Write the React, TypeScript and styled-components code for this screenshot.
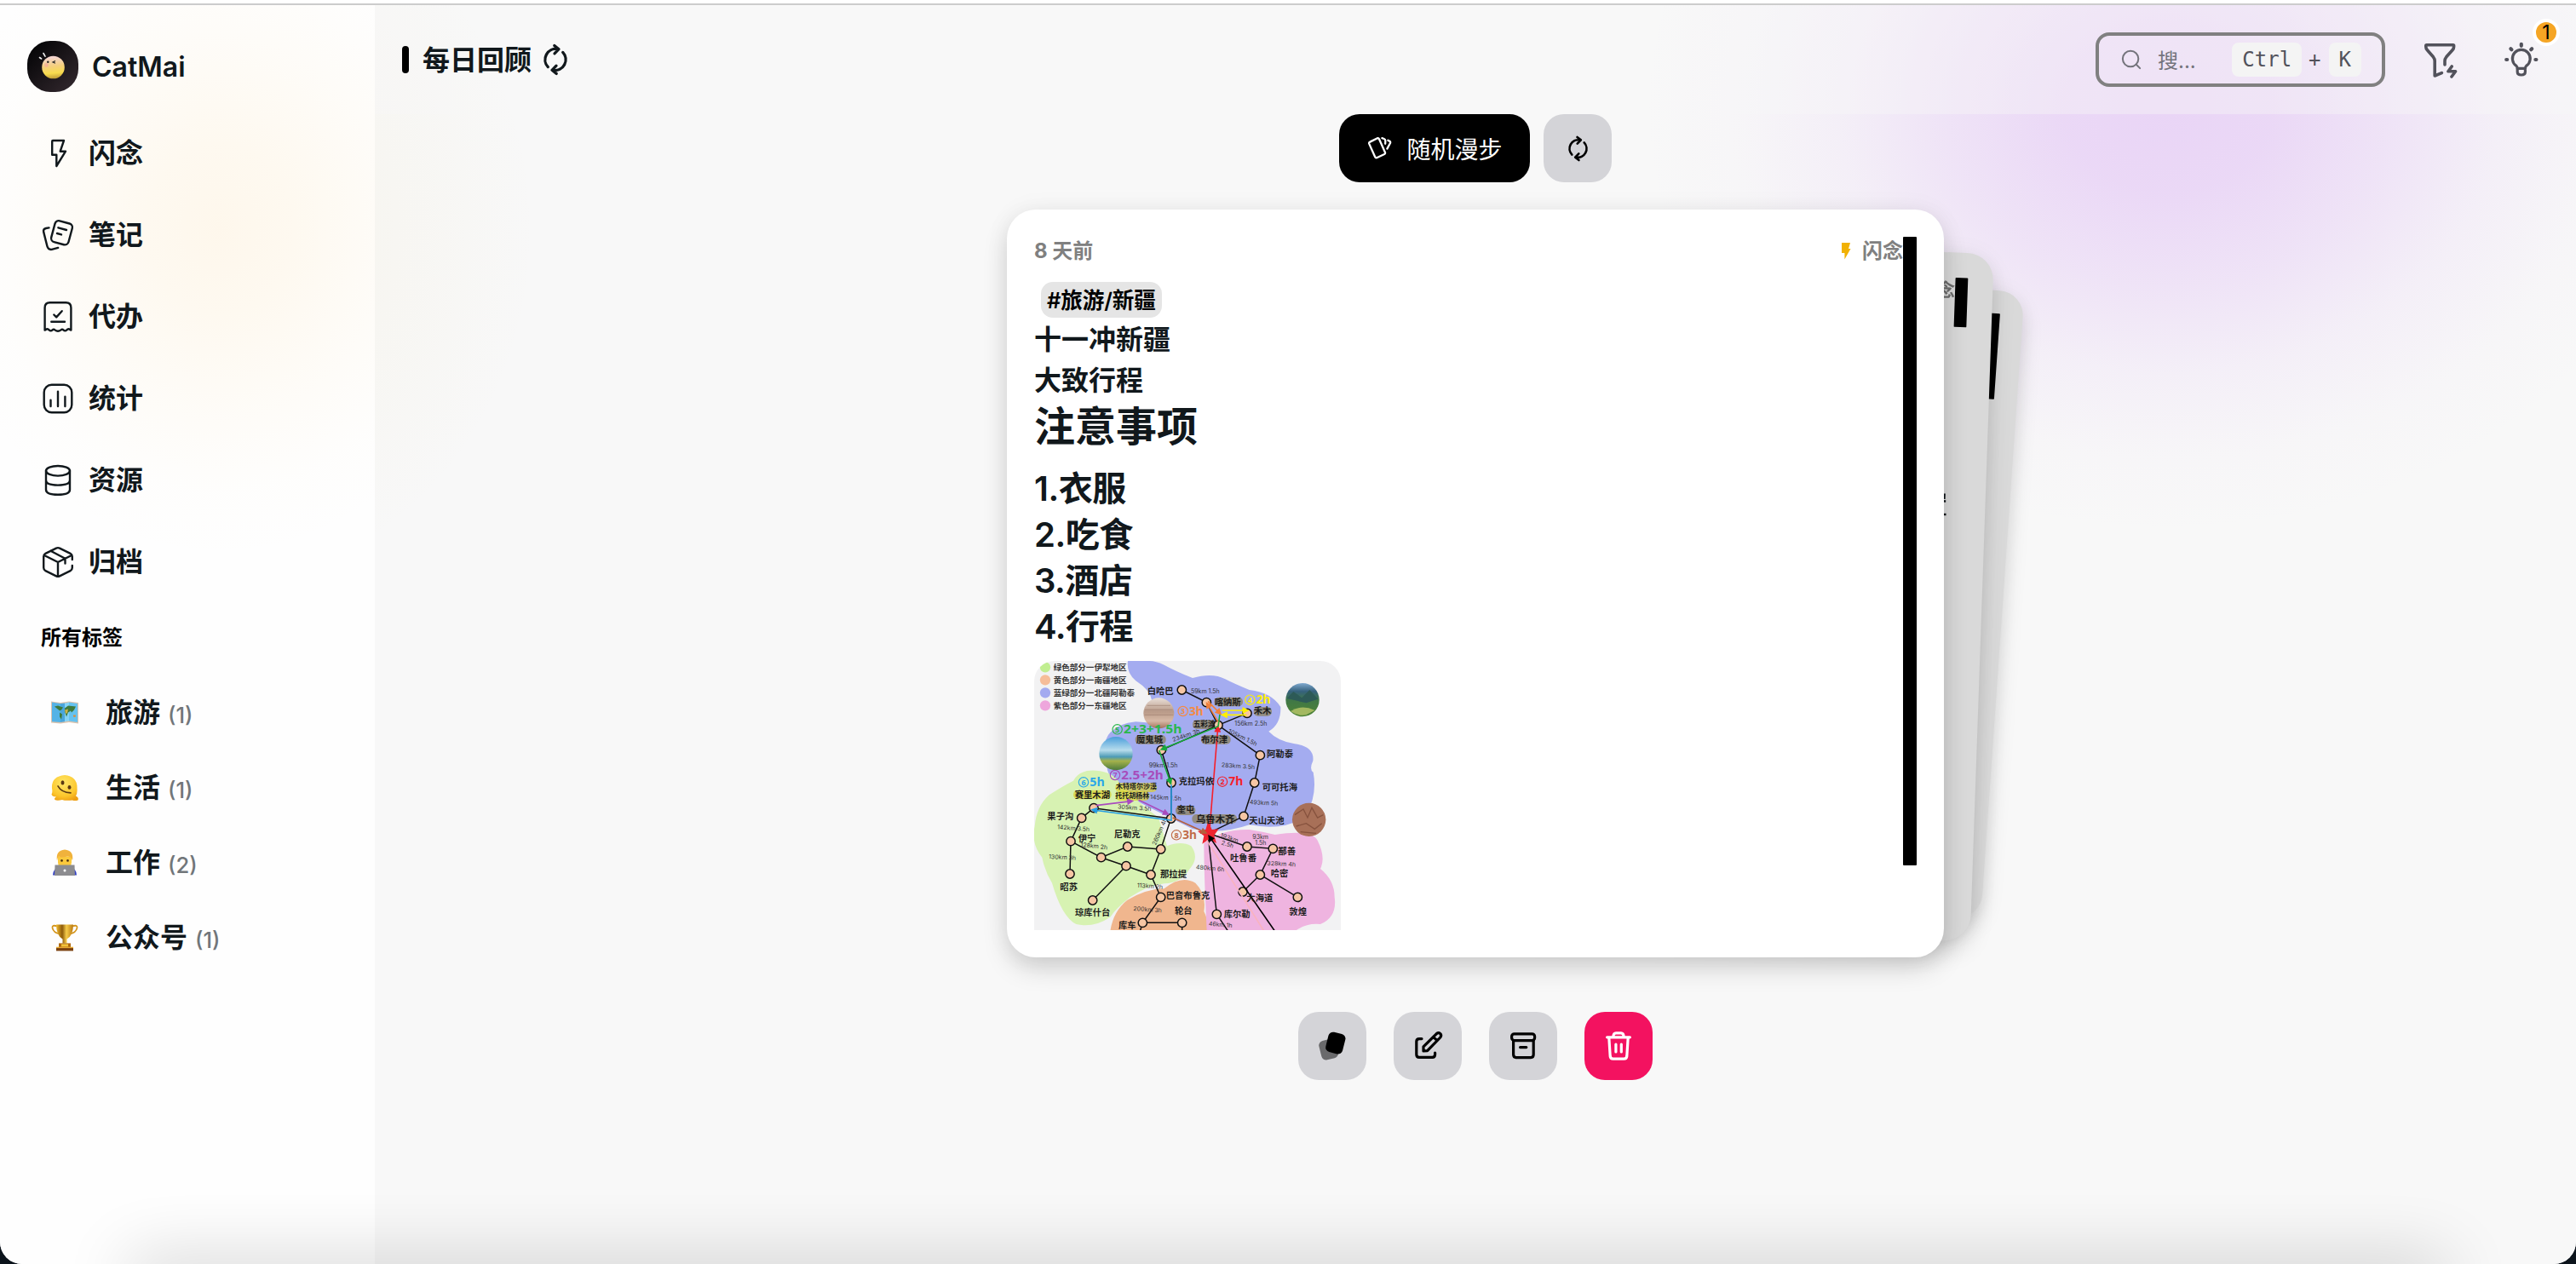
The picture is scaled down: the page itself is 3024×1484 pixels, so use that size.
import React from "react";
import styled, { createGlobalStyle, css } from "styled-components";

const sans = `Inter, "Noto Sans CJK SC", sans-serif`;
const mono = `"DejaVu Sans Mono", "Liberation Mono", monospace`;

const GlobalStyle = createGlobalStyle`
  *, *::before, *::after { box-sizing: border-box; }
  html, body { margin: 0; padding: 0; background: #0c141c; }
  body { font-family: ${sans}; color: #11181c; overflow: hidden; }
  svg { display: block; flex: none; }
  p, h1, h2, h3 { margin: 0; }
`;

/* ---------- shell ---------- */

const Shell = styled.div`
  position: relative;
  display: flex;
  flex-direction: column;
  width: 3024px;
  height: 1484px;
  overflow: hidden;
  border-radius: 0 0 26px 26px;
  background: #f8f8f8;
`;

const TopEdge = styled.div`
  flex: none;
  height: 6px;
  background: #fff;
  border-bottom: 2px solid #ccc;
`;

const Body = styled.div`
  flex: 1;
  display: flex;
  min-height: 0;
`;

const BottomShade = styled.div`
  position: absolute;
  left: 160px;
  right: 160px;
  bottom: -34px;
  height: 30px;
  box-shadow: 0 0 80px 8px rgba(0, 0, 0, 0.2);
  pointer-events: none;
`;

/* ---------- sidebar ---------- */

const Sidebar = styled.aside`
  flex: none;
  width: 440px;
  padding-top: 42px;
  background:
    radial-gradient(
      ellipse 340px 390px at 258px 262px,
      rgba(255, 190, 85, 0.105) 0%,
      rgba(255, 195, 90, 0.085) 25%,
      rgba(255, 200, 100, 0.042) 55%,
      rgba(255, 205, 120, 0.012) 80%,
      rgba(255, 205, 120, 0) 100%
    ),
    #fefefe;
`;

const Brand = styled.div`
  display: flex;
  align-items: center;
  gap: 16px;
  height: 60px;
  padding-left: 32px;
  font-size: 32px;
  font-weight: 600;
  line-height: 60px;
`;

const BrandName = styled.span`
  padding-top: 2px;
`;

const Nav = styled.nav`
  display: flex;
  flex-direction: column;
  margin-top: 24px;
`;

const NavItem = styled.a`
  display: flex;
  align-items: center;
  gap: 16px;
  height: 96px;
  padding-left: 48px;
  font-size: 32px;
  font-weight: 600;
`;

const NavLabel = styled.span`
  line-height: 48px;
`;

const SectionTitle = styled.h3`
  height: 40px;
  margin: 21px 0 24px;
  padding-left: 48px;
  color: #000;
  font-size: 24px;
  font-weight: 700;
  line-height: 40px;
`;

const TagItem = styled.a`
  display: flex;
  align-items: center;
  height: 88px;
  padding-left: 60px;
`;

const TagName = styled.span`
  margin-left: 32px;
  font-size: 32px;
  font-weight: 600;
  line-height: 48px;
`;

const TagCount = styled.small`
  margin: 6px 0 0 9px;
  color: #71767a;
  font-size: 25.6px;
  font-weight: 500;
  line-height: 40px;
`;

/* ---------- header ---------- */

const Main = styled.main`
  flex: 1;
  display: flex;
  flex-direction: column;
  align-items: center;
  background:
    radial-gradient(
      ellipse 620px 500px at 2105px 120px,
      rgba(190, 110, 240, 0.255) 0%,
      rgba(190, 110, 240, 0.23) 20%,
      rgba(190, 115, 240, 0.155) 42%,
      rgba(192, 125, 240, 0.075) 62%,
      rgba(195, 135, 240, 0.02) 82%,
      rgba(200, 140, 240, 0) 100%
    ),
    radial-gradient(
      ellipse 370px 420px at -180px 264px,
      rgba(225, 190, 70, 0.12) 0%,
      rgba(225, 195, 90, 0.045) 50%,
      rgba(225, 200, 100, 0) 100%
    ),
    #f8f8f8;
`;

const Header = styled.header`
  display: flex;
  align-items: center;
  width: 100%;
  height: 128px;
  padding: 0 42px 0 32px;
  background: rgba(248, 248, 248, 0.4);
`;

const TitleMark = styled.span`
  width: 8px;
  height: 32px;
  border-radius: 4px;
  background: #000;
`;

const Title = styled.h1`
  margin: 0 8px 0 16px;
  padding-top: 1px;
  font-size: 32px;
  font-weight: 600;
  line-height: 48px;
`;

const Spacer = styled.div`
  flex: 1;
`;

const SearchBox = styled.div`
  display: flex;
  align-items: center;
  width: 340px;
  height: 64px;
  padding: 0 24px 0 26px;
  border: 4px solid #808080;
  border-radius: 16px;
  color: #52525b;
  font-family: ${mono};
  font-size: 24px;
`;

const Placeholder = styled.span`
  flex: 1;
  margin-left: 19px;
  padding-bottom: 2px;
  color: #74747c;
  font-family: ${sans};
`;

const Key = styled.kbd`
  padding: 0 12px;
  border-radius: 8px;
  background: #f4f4f4;
  font-family: ${mono};
  font-size: 24px;
  line-height: 40px;
`;

const Plus = styled.span`
  margin: 0 9px 0 8px;
`;

const HeaderIcon = styled.span<{ $gap: number }>`
  position: relative;
  margin-left: ${(p) => p.$gap}px;
  color: #52525b;
`;

const Badge = styled.span`
  position: absolute;
  left: 35px;
  top: -26px;
  width: 32px;
  height: 32px;
  border: 4px solid #fff;
  border-radius: 50%;
  background: #f5a524;
  color: #000;
  font-size: 23px;
  line-height: 24px;
  text-align: center;
`;

/* ---------- actions ---------- */

const ActionRow = styled.div<{ $gap: number; $top?: number }>`
  display: flex;
  gap: ${(p) => p.$gap}px;
  margin-top: ${(p) => p.$top ?? 0}px;
`;

const tones = {
  dark: css`background: #000; color: #fff;`,
  gray: css`background: #d4d4d8; color: #000;`,
  danger: css`background: #f31260; color: #fff;`,
};

const Button = styled.button<{ $tone: keyof typeof tones; $wide?: boolean }>`
  display: flex;
  align-items: center;
  justify-content: center;
  gap: 17px;
  width: ${(p) => (p.$wide ? 224 : 80)}px;
  height: 80px;
  padding: 0;
  border: 0;
  border-radius: 24px;
  font-family: ${sans};
  font-size: 28px;
  ${(p) => tones[p.$tone]}
`;

/* ---------- card deck ---------- */

const Deck = styled.section`
  position: relative;
  width: 1100px;
  height: 878px;
  margin-top: 32px;
`;

const Card = styled.article<{ $back?: boolean }>`
  position: absolute;
  inset: 0;
  display: flex;
  padding: 32px;
  border-radius: 34px;
  background: #fff;
  box-shadow:
    0 14px 30px -2px rgba(0, 0, 0, 0.17),
    0 0 30px rgba(0, 0, 0, 0.05);
  ${(p) => p.$back && css`filter: brightness(0.85);`}
`;

const CardContent = styled.div`
  flex: 1;
  height: 814px;
  overflow: hidden;
`;

const Thumb = styled.div<{ $length: number }>`
  flex: none;
  width: 16px;
  height: ${(p) => p.$length}px;
  border-radius: 1px;
  background: #000;
`;

const CardMeta = styled.div`
  display: flex;
  align-items: center;
  justify-content: space-between;
  height: 32px;
  margin-bottom: 16px;
  padding-top: 2px;
  color: #808080;
  font-size: 24px;
  font-weight: 700;
  line-height: 32px;
`;

const Kind = styled.span`
  display: flex;
  align-items: center;
  gap: 8px;
`;

const Line = styled.p<{ $right?: boolean; $top?: number }>`
  margin-top: ${(p) => p.$top ?? 0}px;
  padding-top: 1px;
  height: 48px;
  font-size: 32px;
  font-weight: 600;
  line-height: 48px;
  text-align: ${(p) => (p.$right ? "right" : "left")};
`;

const TagLine = styled.div`
  display: flex;
  align-items: flex-end;
  height: 48px;
  padding: 0 0 1px 8px;
`;

const HashTag = styled.span`
  height: 42px;
  padding: 0 7px;
  border-radius: 14px;
  background: #e5e5e5;
  color: #000;
  font-size: 25.6px;
  font-weight: 600;
  letter-spacing: -0.15px;
  line-height: 43px;
`;

const NoteHeading = styled.h2`
  margin-bottom: 15px;
  font-size: 48px;
  font-weight: 700;
  line-height: 62px;
`;

const NoteItem = styled.h3`
  font-size: 40px;
  font-weight: 600;
  letter-spacing: -0.5px;
  line-height: 54px;
`;

const Picture = styled.div`
  width: 360px;
  height: 316px;
  margin-top: 13px;
  overflow: hidden;
  border-radius: 24px 24px 0 0;
`;

/* ---------- icons ---------- */

type IconProps = { size?: number; stroke?: number; box?: number; children?: React.ReactNode };

const Icon = ({ size = 40, stroke = 2.4, box = 40, children }: IconProps) => (
  <svg
    width={size}
    height={size}
    viewBox={`0 0 ${box} ${box}`}
    fill="none"
    stroke="currentColor"
    strokeWidth={stroke}
    strokeLinecap="round"
    strokeLinejoin="round"
  >
    {children}
  </svg>
);

const BoltIcon = () => (
  <Icon><path d="M14 5H27L22.7 17.7H29L18.3 35V21.8H13.2V6Q13.2 5 14 5Z" /></Icon>
);

const NotesIcon = () => (
  <Icon>
    <rect x="14" y="4.5" width="21" height="25.6" rx="4.5" transform="rotate(15 24.5 17.3)" />
    <path d="M20.4 11.3L30 14M19 18L24 19.4M9.5 11.4L6 12Q2.4 12.8 3.2 16.4L7.4 33Q8.6 37.4 12.8 36.9L20.2 34.9" />
  </Icon>
);

const TodoIcon = () => (
  <Icon>
    <path d="M4.6 35.6V9.2Q4.6 3.2 10.6 3.2H29.4Q35.4 3.2 35.4 9.2V35.6L33.2 34.4Q31.6 34 30.4 35.4Q28.4 37.4 26.4 35.4Q25 34 23.6 35.4Q20 38 16.4 35.4Q15 34 13.6 35.4Q11.6 37.4 9.6 35.4Q8.4 34 6.8 34.4ZM15.3 17.5L18.2 20.4L24.7 13.2M12.3 25.7H28" />
  </Icon>
);

const StatsIcon = () => (
  <Icon>
    <rect x="3.7" y="3.7" width="32.6" height="32.6" rx="9" />
    <path d="M11.5 21.8V29M20 11.6V29M28.4 17.6V29" />
  </Icon>
);

const DatabaseIcon = () => (
  <Icon>
    <ellipse cx="20" cy="8.8" rx="14" ry="5.8" />
    <path d="M6 8.8V31Q6 36.8 20 36.8T34 31V8.8M6 20Q6 25.6 20 25.6T34 20" />
  </Icon>
);

const BoxIcon = () => (
  <Icon>
    <path d="M36.8 17V13.5Q36.8 11 34.6 9.8L22 3.6Q20 2.7 18 3.6L5.4 9.8Q3.2 11 3.2 13.5V26.5Q3.2 29 5.4 30.2L18 36.4Q20 37.4 22 36.4L34.6 30.2Q36.8 29 36.8 26.5V24M4 12L20 20L36 12M20 20V36.8M11.4 6.8L28.5 15.8V21.5" />
  </Icon>
);

const LoopIcon = ({ size = 40, stroke = 3.3 }: IconProps) => (
  <Icon size={size} stroke={stroke}>
    <path d="M11.3 28.6A12.5 12.5 0 0 1 22.5 7.7M18.8 3.6L24 7.7L19 12.8M28.7 11.4A12.5 12.5 0 0 1 17.5 32.3M21.2 36.4L16 32.3L21 27.2" />
  </Icon>
);

const SearchIcon = () => (
  <Icon size={24} box={26} stroke={2.2}>
    <g stroke="#74747c">
      <circle cx="12" cy="12" r="10" />
      <path d="M19 19L24 24" />
    </g>
  </Icon>
);

const FilterIcon = () => (
  <Icon size={44} box={44} stroke={3.6}>
    <path d="M27 28V23.5Q27 21 28.8 18.8L36 10.8Q37.6 9 37.6 7V5.6Q37.6 4.8 36.8 4.8H5.6Q4.8 4.8 4.8 5.6V7Q4.8 9 6.4 10.8L13.4 18.8Q15.2 21 15.2 23.5V41L23.4 37.6M35.2 30L31 35.8H39.6L35 42" />
  </Icon>
);

const BulbIcon = () => (
  <Icon size={44} box={44} stroke={3.2}>
    <path d="M17 32.4Q17.4 30.6 16 29.4A10.4 10.4 0 1 1 27.6 29.4Q26.2 30.6 26.6 32.4ZM17.2 33V36.6Q17.2 40 21.8 40T26.4 36.6V33" />
    <path strokeWidth="4.2" d="M21.8 3.8V5.8M4.2 22H5.2M38.4 22H39.4M9.4 9.2L10.4 10.2M34.2 9.2L33.2 10.2" />
  </Icon>
);

const WanderIcon = () => (
  <Icon size={30} box={30} stroke={2.3}>
    <path d="M4.2 7.6L13 3.2Q14.4 2.8 15 4.2L22 20Q22.4 21.4 21.2 22L12.2 26.2Q10.8 26.6 10.2 25.2L3.2 9.6Q2.8 8.2 4.2 7.6ZM18.4 3.2L20.8 4Q22.4 4.6 22.3 6.4L22.2 9.8M25.4 5.8L27 6.6Q28.6 7.4 28 9L24.4 15.6" />
  </Icon>
);

const DeckIcon = () => (
  <Icon>
    <g fill="currentColor" stroke="none">
      <rect x="5.6" y="12.6" width="20" height="23" rx="5.5" opacity="0.5" transform="rotate(-14 15.6 24.1)" />
      <rect x="13.6" y="4.6" width="20.4" height="24" rx="5.5" transform="rotate(14 23.8 16.6)" />
    </g>
  </Icon>
);

const EditIcon = () => (
  <Icon stroke={3.2}>
    <path d="M13 11.6H10Q6.8 11.6 6.8 14.8V30Q6.8 33.4 10 33.4H25.4Q28.6 33.4 28.6 30V28M15 26V20.8L30.4 5.6Q32.8 3.8 34.8 5.6Q36.6 7.8 34.8 10L19.6 25.6ZM26.8 9.6L31 13.6" />
  </Icon>
);

const ArchiveIcon = () => (
  <Icon stroke={3.2}>
    <rect x="6.6" y="5.8" width="27" height="7.8" rx="3" />
    <path d="M8.6 13.6V30Q8.6 33.6 12 33.6H29Q32.2 33.6 32.2 30V13.6M16.6 21.6H23.8" />
  </Icon>
);

const TrashIcon = () => (
  <Icon stroke={3.2}>
    <path d="M6.6 9.8H33.4M13.8 9.4Q14 4.8 17 4.8H23Q26 4.8 26.2 9.4M8.8 10L10.2 32Q10.5 35.2 13.6 35.2H26.4Q29.5 35.2 29.8 32L31.2 10M16.9 18V27M23.3 18V27" />
  </Icon>
);

const SmallBolt = () => (
  <svg width="26" height="24" viewBox="0 0 26 24">
    <path fill="#f1b104" d="M10 2H20L18 9H20.5L13.4 21.6V14H10Z" />
  </svg>
);

const Avatar = () => (
  <svg width="60" height="60" viewBox="0 0 60 60">
    <defs>
      <linearGradient id="night" x1="0" y1="0" x2="1" y2="1">
        <stop offset="0.1" stopColor="#050507" />
        <stop offset="1" stopColor="#352a30" />
      </linearGradient>
      <linearGradient id="face" x1="0" y1="0" x2="0.1" y2="1">
        <stop offset="0.1" stopColor="#f4d5d0" />
        <stop offset="0.5" stopColor="#f5cf7c" />
        <stop offset="0.8" stopColor="#f8dc4e" />
        <stop offset="1" stopColor="#c9a63a" />
      </linearGradient>
    </defs>
    <rect width="60" height="60" rx="27" fill="url(#night)" />
    <circle cx="30.5" cy="31" r="13.3" fill="url(#face)" />
    <path d="M14.5 19.5L16.6 21M19 14.5L21 18.2" stroke="#eee" strokeWidth="1.6" strokeLinecap="round" />
    <circle cx="24.3" cy="24.8" r="1.2" fill="#222" />
    <path d="M33 23.6L30 25L33 26.2" stroke="#222" strokeWidth="1.1" fill="none" />
    <circle cx="22.5" cy="28.5" r="2.4" fill="#f3a39b" opacity="0.6" />
  </svg>
);

/* ---------- tag pictograms ---------- */

const WorldMap = () => (
  <svg width="32" height="32" viewBox="0 0.6 32 32">
    <path d="M0 3L11 4.5L21 3L32 4.5V29L21 27.5L11 29L0 28Z" fill="#dcc3ad" />
    <path d="M1 4L11 5.5V27.5L1 26.8Z" fill="#55b3e6" />
    <path d="M11 5.5L16 5V26.8L11 27.5Z" fill="#4aa6dc" />
    <path d="M16 5L21 4V26L16 26.8Z" fill="#86d3f6" />
    <path d="M21 4L31 5.5V27.5L21 26Z" fill="#66c2f0" />
    <path d="M4 9L8 8L14 10L12 13L10 14L9 13ZM10 16L13 18L12 24L10 21ZM16 11L20 8L29 9L27 13L24 16L23 14L20 16L18 21L16 15Z" fill="#3f7a3c" />
    <path d="M16 13L20 12L19 17L17 17Z" fill="#c9b24a" />
    <path d="M26 19L29 19L28.5 21.5L26 21Z" fill="#d78f3c" />
  </svg>
);

const MeltingFace = () => (
  <svg width="32" height="32" viewBox="0 0.6 32 32">
    <defs>
      <radialGradient id="melt" cx="0.45" cy="0.3" r="0.75">
        <stop offset="0" stopColor="#ffe766" />
        <stop offset="0.7" stopColor="#fcc62c" />
        <stop offset="1" stopColor="#ee9f13" />
      </radialGradient>
    </defs>
    <path d="M1 17Q0 3 16 1.5Q31 3 30.5 17Q31 23 29 26Q33 28 31.5 31Q28 32 25 31Q17 32 13 30.5Q7 32 4.5 30.5Q3 29 6 27Q1 27 0.5 24Q2 22 1 17Z" fill="url(#melt)" />
    <ellipse cx="13.5" cy="10.5" rx="2" ry="2.7" fill="#5b3a12" />
    <ellipse cx="21.5" cy="16" rx="2" ry="2.4" fill="#5b3a12" />
    <path d="M8 14.5Q12 22 23 22.5" stroke="#5b3a12" strokeWidth="1.6" fill="none" strokeLinecap="round" />
  </svg>
);

const Technologist = () => (
  <svg width="32" height="32" viewBox="0 0.6 32 32">
    <path d="M2 31Q2.5 23 9 22H23Q29.5 23 30 31Z" fill="#3341c4" />
    <path d="M8 9H24V16Q24 23 16 23Q8 23 8 16Z" fill="#fbc93c" />
    <path d="M7 14Q5 2 16 1Q27 2 25 14Q24 9 19 9Q12 11 9 9Q7.5 10 7 14Z" fill="#f0b23c" />
    <circle cx="12.5" cy="14" r="1.3" fill="#4a3010" />
    <circle cx="19.5" cy="14" r="1.3" fill="#4a3010" />
    <path d="M4.5 19H27.5L28 31.5H4Z" fill="#8c8c90" />
    <circle cx="16" cy="25.5" r="1.5" fill="#fff" />
  </svg>
);

const Trophy = () => (
  <svg width="32" height="32" viewBox="0 0.6 32 32">
    <defs>
      <linearGradient id="gold" x1="0" y1="0" x2="1" y2="0">
        <stop offset="0" stopColor="#f3bb2d" />
        <stop offset="0.35" stopColor="#8d5a0a" />
        <stop offset="0.6" stopColor="#f6cc4a" />
        <stop offset="1" stopColor="#b9770f" />
      </linearGradient>
    </defs>
    <path d="M7 3Q1 1 1.5 5Q3 11 10 12M25 3Q31 1 30.5 5Q29 11 22 12" stroke="#d4951c" strokeWidth="1.8" fill="none" />
    <path d="M6 1H26Q26 14 18.5 18V23H13.5V18Q6 14 6 1Z" fill="url(#gold)" />
    <path d="M9 23H23V28H9Z" fill="#b06a10" />
    <path d="M12 24H20V27H12Z" fill="#f2c33b" />
    <path d="M6 28H26V32H6Z" fill="#7b4210" />
    <path d="M6 28H26" stroke="#e9aa33" strokeWidth="1.4" />
  </svg>
);

/* ---------- route map ---------- */

type Pt = [number, number];

const roads: Pt[][] = [
  [[562, 150], [649, 194], [690, 274], [792, 232]],
  [[690, 274], [838, 380], [818, 477], [780, 595], [655, 655]],
  [[690, 274], [490, 362], [525, 477], [524, 603], [488, 711], [453, 801], [488, 880], [424, 970], [563, 970], [563, 1000]],
  [[424, 970], [415, 1000]],
  [[524, 603], [252, 566], [209, 601], [171, 683], [168, 798]],
  [[171, 683], [278, 740], [371, 702], [488, 711]],
  [[278, 740], [366, 770], [453, 801]],
  [[366, 770], [248, 891]],
  [[655, 655], [792, 702], [883, 709], [838, 801], [970, 880]],
  [[838, 801], [777, 861]],
  [[655, 665], [685, 940], [725, 1000]],
];

const stops: Pt[] = [
  [562, 150], [649, 194], [690, 274], [792, 232], [838, 380], [818, 477], [780, 595],
  [490, 362], [525, 477], [524, 603], [488, 711], [453, 801], [488, 880], [424, 970],
  [563, 970], [252, 566], [209, 601], [171, 683], [168, 798], [278, 740], [371, 702],
  [366, 770], [248, 891], [792, 702], [883, 709], [838, 801], [970, 880], [777, 861], [685, 940],
];

const highlights: [number, number, number][] = [
  [677, 176, 100], [815, 210, 64], [600, 256, 80], [398, 309, 108], [630, 309, 104],
  [180, 503, 134], [328, 478, 146], [328, 508, 120], [540, 559, 70], [598, 588, 158],
];

const towns: [string, number, number, number?][] = [
  ["白哈巴", 440, 166], ["喀纳斯", 677, 204], ["禾木", 815, 235], ["五彩滩", 602, 279, 26],
  ["魔鬼城", 402, 336], ["布尔津", 630, 336], ["阿勒泰", 861, 386], ["可可托海", 845, 503],
  ["克拉玛依", 551, 484], ["赛里木湖", 185, 531], ["木特塔尔沙漠", 330, 499, 24],
  ["托托胡杨林", 328, 530, 24], ["奎屯", 545, 583], ["乌鲁木齐", 612, 619, 34],
  ["天山天池", 799, 621], ["果子沟", 88, 606], ["伊宁", 197, 684], ["尼勒克", 323, 669],
  ["吐鲁番", 732, 753], ["鄯善", 901, 730], ["哈密", 875, 807], ["那拉提", 486, 811],
  ["昭苏", 133, 855], ["琼库什台", 186, 946], ["巴音布鲁克", 506, 885], ["轮台", 537, 938],
  ["库车", 339, 991], ["库尔勒", 710, 951], ["大海道", 790, 893], ["敦煌", 940, 943],
];

const distances: [string, number, number, number?][] = [
  ["59km 1.5h", 594, 162], ["156km 2.5h", 748, 275], ["105km 1.5h", 724, 300, 26],
  ["234km 3h", 532, 333, -19], ["283km 3.5h", 701, 421, 4], ["99km 1.5h", 446, 422],
  ["493km 5h", 800, 552, 3], ["145km 1.5h", 450, 534, 3], ["305km 3.5h", 336, 568, 4],
  ["142km 3.5h", 123, 640, 4], ["128km 2h", 205, 702, 6], ["260km 4h", 470, 698, -66],
  ["130km 3h", 93, 744, 3], ["193km", 697, 668, 18], ["2.5h", 700, 694, 18],
  ["93km", 811, 676], ["1.5h", 820, 697], ["328km 4h", 862, 767, 3], ["480km 6h", 611, 781, 5],
  ["113km 2h", 404, 845, 4], ["200km 3h", 391, 927, 4], ["46km 1h", 656, 980, 5],
];

const legs: [string, string, string, number, number, number][] = [
  ["4", "2h", "#fff000", 783, 199, 875], ["3", "3h", "#f58a42", 547, 239, 638],
  ["5", "2+3+1.5h", "#2ab84c", 316, 303, 562], ["7", "2.5+2h", "#a74dbb", 308, 464, 497],
  ["6", "5h", "#2ba8e8", 197, 489, 290], ["2", "7h", "#f5202c", 686, 487, 778],
  ["8", "3h", "#c06c48", 524, 675, 615],
];

const legend: [string, string][] = [
  ["#c1ee91", "绿色部分一伊犁地区"],
  ["#f6bd99", "黄色部分一南疆地区"],
  ["#a3aaf0", "蓝绿部分一北疆阿勒泰"],
  ["#eea6dc", "紫色部分一东疆地区"],
];

const arrowColors: Record<string, string> = {
  red: "#f5202c",
  green: "#17a83c",
  blue: "#279fe4",
  purple: "#a94bbd",
  brown: "#b4603c",
  orange: "#f0803c",
  yellow: "#fff000",
  black: "#000",
};

const arrows: [string, string][] = [
  ["red", "M660 640L689 284"],
  ["green", "M696 236L690 278L494 358"],
  ["green", "M482 362L522 476"],
  ["blue", "M525 484V609L250 573"],
  ["purple", "M260 557L384 542"],
  ["purple", "M410 538L510 586"],
  ["brown", "M530 600L644 652"],
  ["orange", "M690 262L652 200"],
  ["orange", "M654 190L696 232"],
  ["yellow", "M704 222H790"],
  ["yellow", "M790 238H708"],
  ["black", "M890 1000L660 668"],
];

const RouteMap = () => (
  <svg width="360" height="316" viewBox="42 48 1080 948" fontFamily={sans}>
    <defs>
      {Object.entries(arrowColors).map(([id, color]) => (
        <marker key={id} id={`tip-${id}`} viewBox="0 0 10 10" refX="6" refY="5" markerWidth="5.5" markerHeight="5" orient="auto">
          <path d="M0 0L10 5L0 10Z" fill={color} />
        </marker>
      ))}
      <linearGradient id="hills" x1="0" y1="0" x2="0" y2="1">
        <stop offset="0" stopColor="#7fa9cf" />
        <stop offset="0.25" stopColor="#35617c" />
        <stop offset="0.5" stopColor="#3f7747" />
        <stop offset="1" stopColor="#4f8434" />
      </linearGradient>
      <linearGradient id="lake" x1="0" y1="0" x2="0" y2="1">
        <stop offset="0" stopColor="#4a9edb" />
        <stop offset="0.4" stopColor="#b7dcec" />
        <stop offset="0.6" stopColor="#4d9bb5" />
        <stop offset="0.72" stopColor="#a5b24c" />
        <stop offset="1" stopColor="#4a7a3c" />
      </linearGradient>
      <linearGradient id="sand" x1="0" y1="0" x2="0" y2="1">
        <stop offset="0" stopColor="#e9dfd8" />
        <stop offset="0.45" stopColor="#b99a88" />
        <stop offset="0.75" stopColor="#d7b9a6" />
        <stop offset="1" stopColor="#a5705a" />
      </linearGradient>
    </defs>
    <rect x="42" y="48" width="1080" height="948" fill="#f2f2f3" />
    <path fill="#a4acf0" d="M372 48Q366 90 400 118Q450 150 456 185L500 270L400 262Q340 268 310 300Q280 330 300 400Q290 440 330 480L400 540L520 600L600 640Q700 660 800 625Q930 650 1000 590Q1040 520 1025 440Q1010 430 1024 400Q1030 350 960 340Q900 330 868 296Q912 270 910 210Q880 160 800 150Q750 130 715 112Q670 88 600 108Q540 84 500 62Q470 48 450 48Z" />
    <path fill="#d7f2b2" d="M180 470Q200 430 260 434Q320 438 345 480Q400 540 480 600L510 700Q560 680 595 700Q625 740 590 780Q560 830 500 832Q440 840 380 880Q330 920 310 950Q250 990 190 975Q140 950 105 830Q80 790 70 740Q30 690 44 630Q50 560 95 520Q140 490 180 470Z" />
    <path fill="#f0b68e" d="M310 1000Q320 930 370 890Q440 850 500 850Q560 800 610 830Q650 870 640 930Q660 970 650 1000Z" />
    <path fill="#efb4e0" d="M640 690Q700 640 800 642Q850 650 890 660Q1020 640 1040 680Q1070 740 1050 780Q1100 820 1100 880Q1110 950 1050 975Q1000 970 960 1000H650Q640 800 640 690Z" />
    {legend.map(([color, label], i) => (
      <g key={label}>
        <circle cx="81" cy={70 + i * 45} r="18.5" fill={color} />
        <text x="110" y={80 + i * 45} fontSize="28.7" fontWeight="700" fill="#333">{label}</text>
      </g>
    ))}
    <circle cx="987" cy="185" r="59" fill="url(#hills)" />
    <path d="M932 180L955 156L985 178L1012 150L1042 182L1000 196Z" fill="#2d5a57" />
    <path d="M945 225Q985 200 1030 222L1000 238Q970 243 945 225Z" fill="#a3b860" />
    <circle cx="481" cy="232" r="54" fill="url(#sand)" />
    <path d="M432 220H530M430 238H532M440 205H522" stroke="#9b7b6d" strokeWidth="4" opacity="0.5" />
    <circle cx="330" cy="374" r="59" fill="url(#lake)" />
    <circle cx="1010" cy="607" r="59" fill="#a87058" />
    <path d="M960 590L990 570L1005 600L1020 565L1040 600L1060 590M965 630L1000 620L1030 640L1055 620M980 650L1035 655" stroke="#86523e" strokeWidth="4" fill="none" />
    {highlights.map(([x, y, w], i) => (
      <rect key={i} x={x} y={y} width={w} height="32" rx="15" fill={i > 4 && i < 8 ? "#dbd22d" : "#8a7f50"} opacity="0.7" />
    ))}
    {roads.map((line, i) => (
      <polyline key={i} points={line.map((p) => p.join(",")).join(" ")} fill="none" stroke="#111" strokeWidth="4.5" />
    ))}
    {stops.map(([x, y], i) => (
      <circle key={i} cx={x} cy={y} r="15.5" fill="#f6c6a4" stroke="#111" strokeWidth="4.5" />
    ))}
    <path d="M655 612L668 642L692 640L676 662L684 690L658 676L634 692L640 664L618 648L646 642Z" fill="#ee2430" />
    {distances.map(([label, x, y, turn], i) => (
      <text key={i} x={x} y={y} fontSize="21" fill="#333" transform={`rotate(${turn ?? 0} ${x} ${y})`}>{label}</text>
    ))}
    <path d="M650 680L852 1000" stroke="#f9b3c0" strokeWidth="5" />
    {arrows.map(([id, d], i) => (
      <path key={i} d={d} fill="none" stroke={arrowColors[id]} strokeWidth="4.8" markerEnd={`url(#tip-${id})`} />
    ))}
    {towns.map(([label, x, y, size]) => (
      <text key={label} x={x} y={y} fontSize={size ?? 31} fontWeight="700" fill="#1c1c1c">{label}</text>
    ))}
    {legs.map(([mark, label, color, x, y, end]) => (
      <g key={mark} fill={color} fontWeight="700" fontFamily={`"Noto Sans", sans-serif`}>
        <circle cx={x + 19} cy={y - 14} r="17" fill="none" stroke={color} strokeWidth="3.5" />
        <text x={x + 19} y={y - 4} fontSize="27" textAnchor="middle">{mark}</text>
        <text x={x + 41} y={y} fontSize="40" textLength={end - x - 41} lengthAdjust="spacingAndGlyphs">{label}</text>
      </g>
    ))}
  </svg>
);

/* ---------- page ---------- */

const navItems = [
  { label: "闪念", icon: <BoltIcon /> },
  { label: "笔记", icon: <NotesIcon /> },
  { label: "代办", icon: <TodoIcon /> },
  { label: "统计", icon: <StatsIcon /> },
  { label: "资源", icon: <DatabaseIcon /> },
  { label: "归档", icon: <BoxIcon /> },
];

const tags = [
  { label: "旅游", count: 1, icon: <WorldMap /> },
  { label: "生活", count: 1, icon: <MeltingFace /> },
  { label: "工作", count: 2, icon: <Technologist /> },
  { label: "公众号", count: 1, icon: <Trophy /> },
];

const backCards = [
  { x: 158, y: -6, turn: 4, scale: 0.84, thumb: 120, word: "" },
  { x: 89, y: -1, turn: 2, scale: 0.92, thumb: 63, word: "置" },
];

const noteItems = ["1.衣服", "2.吃食", "3.酒店", "4.行程"];

const KindLabel = () => (
  <Kind>
    <SmallBolt />
    闪念
  </Kind>
);

export default function App() {
  return (
    <>
      <GlobalStyle />
      <Shell>
        <TopEdge />
        <Body>
          <Sidebar>
            <Brand>
              <Avatar />
              <BrandName>CatMai</BrandName>
            </Brand>
            <Nav>
              {navItems.map((item) => (
                <NavItem key={item.label}>
                  {item.icon}
                  <NavLabel>{item.label}</NavLabel>
                </NavItem>
              ))}
            </Nav>
            <SectionTitle>所有标签</SectionTitle>
            {tags.map((tag) => (
              <TagItem key={tag.label}>
                {tag.icon}
                <TagName>{tag.label}</TagName>
                <TagCount>({tag.count})</TagCount>
              </TagItem>
            ))}
          </Sidebar>
          <Main>
            <Header>
              <TitleMark />
              <Title>每日回顾</Title>
              <LoopIcon />
              <Spacer />
              <SearchBox>
                <SearchIcon />
                <Placeholder>搜...</Placeholder>
                <Key>Ctrl</Key>
                <Plus>+</Plus>
                <Key>K</Key>
              </SearchBox>
              <HeaderIcon $gap={43}>
                <FilterIcon />
              </HeaderIcon>
              <HeaderIcon $gap={51}>
                <BulbIcon />
                <Badge>1</Badge>
              </HeaderIcon>
            </Header>
            <ActionRow $gap={16}>
              <Button $tone="dark" $wide>
                <WanderIcon />
                随机漫步
              </Button>
              <Button $tone="gray">
                <LoopIcon size={33} stroke={3.2} />
              </Button>
            </ActionRow>
            <Deck>
              {backCards.map((c) => (
                <Card
                  key={c.turn}
                  $back
                  style={{ transform: `translate(${c.x}px, ${c.y}px) rotate(${c.turn}deg) scale(${c.scale})` }}
                >
                  <CardContent>
                    <CardMeta>
                      <span />
                      <KindLabel />
                    </CardMeta>
                    <Line $right $top={234}>{c.word}</Line>
                  </CardContent>
                  <Thumb $length={c.thumb} />
                </Card>
              ))}
              <Card>
                <CardContent>
                  <CardMeta>
                    <span>8 天前</span>
                    <KindLabel />
                  </CardMeta>
                  <TagLine>
                    <HashTag>#旅游/新疆</HashTag>
                  </TagLine>
                  <Line>十一冲新疆</Line>
                  <Line>大致行程</Line>
                  <NoteHeading>注意事项</NoteHeading>
                  {noteItems.map((text) => (
                    <NoteItem key={text}>{text}</NoteItem>
                  ))}
                  <Picture>
                    <RouteMap />
                  </Picture>
                </CardContent>
                <Thumb $length={738} />
              </Card>
            </Deck>
            <ActionRow $gap={32} $top={64}>
              <Button $tone="gray"><DeckIcon /></Button>
              <Button $tone="gray"><EditIcon /></Button>
              <Button $tone="gray"><ArchiveIcon /></Button>
              <Button $tone="danger"><TrashIcon /></Button>
            </ActionRow>
          </Main>
        </Body>
        <BottomShade />
      </Shell>
    </>
  );
}
